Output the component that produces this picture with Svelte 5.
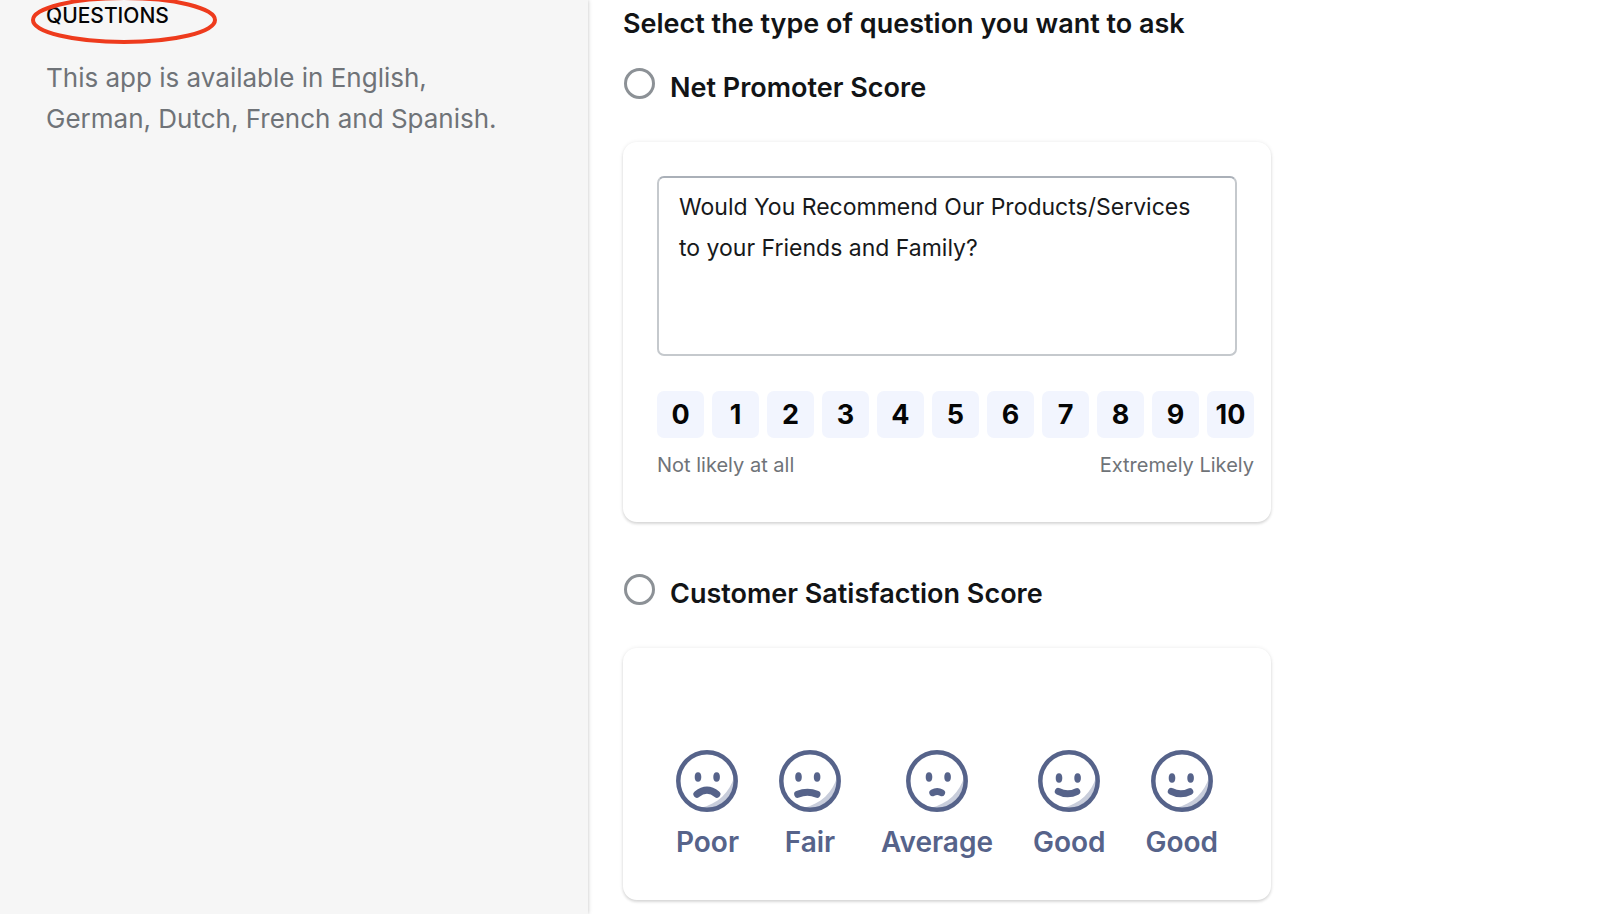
<script>
  const scores = [0, 1, 2, 3, 4, 5, 6, 7, 8, 9, 10];
  const moods = [
    { label: 'Poor', eyeX: 22, eyeY: 27, mouth: 'M20.900 44.300Q31 36 40.900 44.300' },
    { label: 'Fair', eyeX: 19.500, eyeY: 27, mouth: 'M18.700 44.300Q28.500 40 38 44.300' },
    { label: 'Average', eyeX: 23, eyeY: 27, mouth: 'M26.800 42.700Q31.200 40.300 35.600 42.700' },
    { label: 'Good', eyeX: 21, eyeY: 28, mouth: 'M20.300 41.400Q29.500 46.200 38.800 41.600' },
    { label: 'Good', eyeX: 21, eyeY: 28, mouth: 'M20.300 41.400Q29.500 46.200 38.800 41.600' }
  ];
  let question = $state('Would You Recommend Our Products/Services to your Friends and Family?');
</script>

<div class="page">
  <aside>
    <h2>
      QUESTIONS
      <svg class="ring" viewBox="0 0 186 50" aria-hidden="true">
        <ellipse cx="93" cy="25" rx="91" ry="22" />
      </svg>
    </h2>
    <p>This app is available in English, German, Dutch, French and Spanish.</p>
  </aside>

  <main>
    <h1>Select the type of question you want to ask</h1>

    <section>
      <label class="choice">
        <input type="radio" name="type" value="nps" />
        <span>Net Promoter Score</span>
      </label>
      <div class="card">
        <textarea aria-label="Question" bind:value={question}></textarea>
        <div class="scale">
          <div class="scores">
            {#each scores as n}
              <button type="button">{n}</button>
            {/each}
          </div>
          <div class="ends">
            <span>Not likely at all</span>
            <span>Extremely Likely</span>
          </div>
        </div>
      </div>
    </section>

    <section>
      <label class="choice">
        <input type="radio" name="type" value="csat" />
        <span>Customer Satisfaction Score</span>
      </label>
      <div class="card moods">
        {#each moods as m}
          <button type="button" class="mood">
            <svg viewBox="0 0 62 62" aria-hidden="true">
              <path class="shade" d="M58 27C54 42 42 54 24 58A28.500 28.500 0 0 0 58 27Z" />
              <circle class="face" cx="31" cy="31" r="28.700" />
              <ellipse cx={m.eyeX} cy={m.eyeY} rx="3.300" ry="4.700" />
              <ellipse cx={m.eyeX + 18.600} cy={m.eyeY} rx="3.300" ry="4.700" />
              <path class="mouth" d={m.mouth} />
            </svg>
            <span>{m.label}</span>
          </button>
        {/each}
      </div>
    </section>
  </main>
</div>

<style>
  :global(body) {
    margin: 0;
    background: #fff;
  }
  .page {
    display: flex;
    min-height: 100vh;
    font-family: Inter, "Liberation Sans", sans-serif;
    color: #121416;
    overflow: hidden;
  }
  aside {
    flex: 0 0 588px;
    box-sizing: border-box;
    padding: 0 72px 0 46px;
    background: #f6f6f6;
    box-shadow: 0 0 4px rgba(0, 0, 0, 0.25);
  }
  h2 {
    position: relative;
    width: fit-content;
    margin: 0;
    font-size: 21px;
    line-height: 32px;
    font-weight: 500;
    color: #050505;
  }
  .ring {
    position: absolute;
    left: -15px;
    top: -5px;
    width: 186px;
    height: 50px;
    fill: none;
    stroke: #ee3b1d;
    stroke-width: 4;
  }
  p {
    margin: 25px 0 0;
    font-size: 26px;
    line-height: 41px;
    color: #6f7378;
  }
  main {
    flex: 1;
    padding: 0 35px 14px;
  }
  h1 {
    margin: 0;
    padding-top: 3px;
    font-size: 27px;
    line-height: 41px;
    font-weight: 600;
  }
  section {
    max-width: 648px;
    margin-bottom: 28px;
  }
  section:last-child {
    margin-bottom: 0;
  }
  .choice {
    display: flex;
    gap: 15px;
    padding: 23px 0 34px;
    font-size: 27px;
    line-height: 41px;
    font-weight: 600;
  }
  .choice input {
    appearance: none;
    box-sizing: border-box;
    flex: none;
    width: 31px;
    height: 31px;
    margin: 1px 0 0 1px;
    border: 3px solid #8c9196;
    border-radius: 50%;
    background: #fff;
  }
  .card {
    box-sizing: border-box;
    padding: 34px;
    border-radius: 14px;
    background: #fff;
    box-shadow: 0 0 4px rgba(23, 24, 24, 0.08), 0 2px 3px rgba(0, 0, 0, 0.13);
  }
  textarea {
    display: block;
    box-sizing: border-box;
    width: 100%;
    height: 180px;
    padding: 9px 20px;
    border: 2px solid #c5c9cd;
    border-top-color: #aab0b8;
    border-radius: 7px;
    resize: none;
    font: 400 23px/41px Inter, "Liberation Sans", sans-serif;
    color: #17191b;
    background: #fff;
    outline: none;
  }
  .scale {
    margin: 35px -17px 0 0;
  }
  .scores {
    display: grid;
    grid-template-columns: repeat(11, 1fr);
    gap: 8px;
  }
  .scores button {
    height: 47px;
    padding: 1px 0 0;
    border: 0;
    border-radius: 7px;
    background: #f2f5fe;
    font: 700 27px/46px Inter, "Liberation Sans", sans-serif;
    color: #050505;
  }
  .ends {
    display: flex;
    justify-content: space-between;
    margin-top: 12px;
    padding-bottom: 8px;
    font-size: 20px;
    line-height: 30px;
    color: #6f7378;
  }
  .moods {
    display: flex;
    justify-content: center;
    gap: 40px;
    padding: 102px 0 39px;
  }
  .mood {
    display: flex;
    flex-direction: column;
    align-items: center;
    gap: 11px;
    min-width: 62px;
    padding: 0;
    border: 0;
    background: none;
    font: 600 28px/38px Inter, "Liberation Sans", sans-serif;
    color: #56638a;
  }
  .mood svg {
    width: 62px;
    height: 62px;
    fill: #56638a;
  }
  .mood .shade {
    fill: #c8cddb;
  }
  .mood .face,
  .mood .mouth {
    fill: none;
    stroke: #56638a;
    stroke-linecap: round;
  }
  .mood .face {
    stroke-width: 4.5;
  }
  .mood .mouth {
    stroke-width: 7;
  }
</style>
